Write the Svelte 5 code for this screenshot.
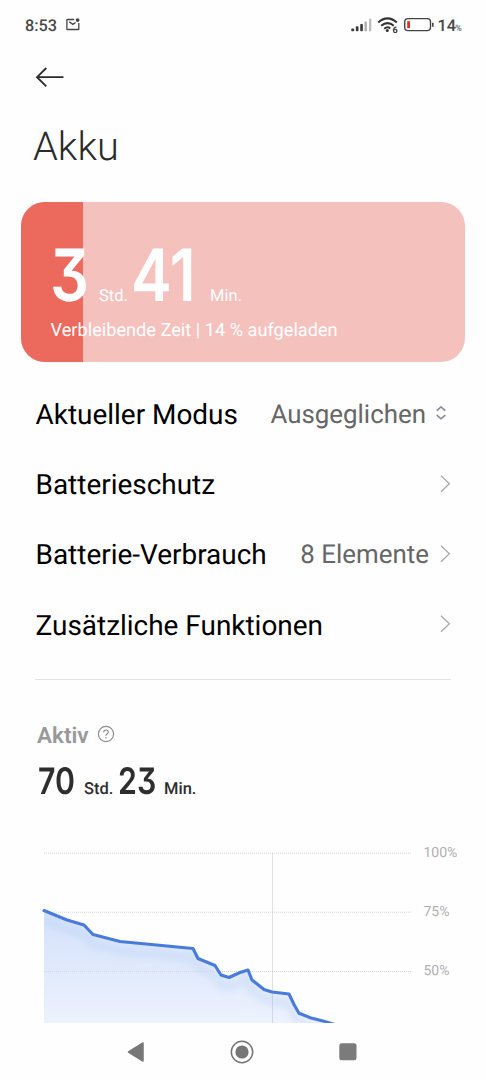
<script>
  const rows = [
    { label: 'Aktueller Modus', value: 'Ausgeglichen', icon: 'sort' },
    { label: 'Batterieschutz', value: '', icon: 'next' },
    { label: 'Batterie-Verbrauch', value: '8 Elemente', icon: 'next' },
    { label: 'Zusätzliche Funktionen', value: '', icon: 'next' }
  ];
  const charge = 14;
  const levels = ['100%', '75%', '50%'];
  const line = '44,70 67,79.5 84,84.5 93,94 120,101 193,108 198,118 215,125 221,134.5 229,137 240,132 248,129.5 252,139.5 264,149 272,151.5 289,153.5 294,164 299,172.7 311,177.5 323,180.5 338,185';
</script>

<div class="screen">
  <header class="status">
    <span class="clock">8:53</span>
    <svg class="mail" width="14" height="13" viewBox="0 0 14 13" fill="none" stroke="#444" stroke-width="1.3">
      <path d="M8.2 1.5H1.4Q.9 1.5 .9 2V10.9Q.9 11.5 1.4 11.5H12.3Q12.8 11.5 12.8 10.9V5" />
      <path d="M3.2 3.8L6.8 6.4L9.6 4.5" />
      <circle cx="11.6" cy="2.1" r="1.9" fill="#444" stroke="none" />
    </svg>
    <div class="spacer"></div>
    <svg width="114" height="24" viewBox="350 13 114 24">
      <g fill="#3c3c3c">
        <rect x="351.2" y="28.5" width="3" height="2.8" rx="1" />
        <rect x="355.8" y="26.3" width="2.7" height="5" rx=".8" />
        <rect x="360.2" y="24" width="2.7" height="7.3" rx=".8" />
        <rect x="364.5" y="21.5" width="2.3" height="9.8" rx=".6" fill="#aaa" />
        <rect x="369" y="18.7" width="2.3" height="12.6" rx=".6" fill="#bbb" />
      </g>
      <g fill="none" stroke="#333" stroke-width="2">
        <path d="M378.2 22.4Q387.5 14.3 396.8 22.4" />
        <path d="M381.2 25.8Q387.5 20.4 393.8 25.8" />
        <path d="M384.2 28.8Q387.5 26 390.2 28.4" />
      </g>
      <circle cx="387.3" cy="30.6" r="1.5" fill="#333" />
      <text x="392.6" y="33" class="wifi">6</text>
      <rect x="404.7" y="18.6" width="25.8" height="12" rx="3.3" fill="#fff" stroke="#444" stroke-width="1.4" />
      <rect x="407.2" y="21.2" width="2.8" height="7" fill="#dc3425" />
      <path d="M432.8 22.8V26.8" stroke="#444" stroke-width="1.6" />
      <text x="437.4" y="31.3" class="pct">14</text>
      <text x="455.2" y="31" class="sign">%</text>
    </svg>
  </header>

  <svg class="back" width="30" height="22" viewBox="0 0 30 22" fill="none" stroke="#2b2b2b" stroke-width="1.8">
    <path d="M28.5 11.2H2M11.3 2L2 11.2L11.3 20.4" />
  </svg>
  <h1>Akku</h1>

  <section class="card">
    <div class="fill" style="width: {charge}%"></div>
    <div class="remaining">
      <span class="num n1">3</span><span class="unit u1">Std.</span><span class="num n2">41</span><span class="unit u2">Min.</span>
    </div>
    <p>Verbleibende Zeit | 14 % aufgeladen</p>
  </section>

  <ul>
    {#each rows as row}
      <li>
        <span class="label">{row.label}</span>
        <span class="value" class:mode={row.icon === 'sort'}>{row.value}</span>
        {#if row.icon === 'sort'}
          <svg class="sort" width="12" height="16" viewBox="0 0 12 16" fill="none" stroke="#858795" stroke-width="1.6">
            <path d="M1.7 5.6L6 2L10.3 5.6M1.7 10.2L6 13.8L10.3 10.2" />
          </svg>
        {:else}
          <svg class="next" width="12" height="18" viewBox="0 0 12 18" fill="none" stroke="#a6a6a6" stroke-width="1.2">
            <path d="M1 .8L9.4 8.8L1 16.8" />
          </svg>
        {/if}
      </li>
    {/each}
  </ul>

  <div class="divider"></div>

  <div class="active">
    <span>Aktiv</span>
    <svg width="18" height="18" viewBox="0 0 18 18" fill="none" stroke="#8e8e8e" stroke-width="1.2">
      <circle cx="9" cy="9" r="7.6" />
      <path d="M6.7 7.3Q6.7 5 9 5T11.3 7.1Q11.3 8.1 10.1 8.9T9 10.8" />
      <path d="M9 12V13.4" />
    </svg>
  </div>
  <div class="total">
    <span class="num">70</span><span class="unit t1">Std.</span><span class="num m2">23</span><span class="unit t2">Min.</span>
  </div>

  <div class="chart">
    <svg width="412" height="183" viewBox="0 0 412 183">
      <defs>
        <linearGradient id="area" x1="0" y1="70" x2="0" y2="183" gradientUnits="userSpaceOnUse">
          <stop offset="0" stop-color="#d3e1fb" />
          <stop offset="1" stop-color="#edf2fd" />
        </linearGradient>
        <clipPath id="under"><polygon points="{line} 338,190 44,190" /></clipPath>
        <filter id="soft" x="-10%" y="-20%" width="120%" height="150%"><feGaussianBlur stdDeviation="3" /></filter>
      </defs>
      <polygon points="{line} 338,190 44,190" fill="url(#area)" />
      <g clip-path="url(#under)">
        <polyline points={line} transform="translate(0 10)" fill="none" stroke="#b4cdf4" stroke-opacity=".32" stroke-width="9" filter="url(#soft)" />
      </g>
      <g stroke="#d4d6da" stroke-width="1" stroke-dasharray="1 1">
        <path d="M44 13.2H411M44 72.2H411M44 131.5H411" />
      </g>
      <path d="M272.5 13V183" stroke="#8791a5" stroke-opacity=".25" />
      <polyline points={line} transform="translate(0 .5)" fill="none" stroke="#487bdc" stroke-width="3.1" stroke-linejoin="round" stroke-linecap="round" />
    </svg>
    <div class="levels">
      {#each levels as level}<span>{level}</span>{/each}
    </div>
  </div>

  <nav>
    <svg width="18" height="24" viewBox="0 0 18 24"><path d="M16 3V21L1.5 12Z" fill="#777" stroke="#777" stroke-width="1.5" stroke-linejoin="round" /></svg>
    <svg width="24" height="24" viewBox="0 0 24 24"><circle cx="12" cy="12" r="10.7" fill="none" stroke="#777" stroke-width="1.5" /><circle cx="12" cy="12" r="6.6" fill="#777" /></svg>
    <svg width="18" height="24" viewBox="0 0 18 24"><rect x=".3" y="3.3" width="17.2" height="17" rx="2.5" fill="#7b7b7b" /></svg>
  </nav>
</div>

<style>
  :global(body) { background: #fff; }
  .screen { width: 486px; height: 1080px; overflow: hidden; display: flex; flex-direction: column; background: #fefefe; font-family: Roboto, sans-serif; color: #000; white-space: nowrap; text-rendering: geometricPrecision; }
  .status { height: 24px; padding: 13px 22px 0 25px; display: flex; align-items: center; flex: none; }
  .clock { font-size: 16.3px; font-weight: 500; color: #484848; line-height: 24px; margin-top: 1px; }
  .mail { margin: -2px 0 0 8.5px; }
  .spacer { flex: 1; }
  .wifi { font-size: 9px; font-weight: 700; fill: #333; }
  .pct { font-size: 16.3px; font-weight: 500; fill: #484848; }
  .sign { font-size: 8.8px; font-weight: 500; fill: #666; }
  .back { margin: 29px 0 0 35px; flex: none; }
  h1 { margin: 35px 0 0 33px; font-size: 39.8px; line-height: 48px; font-weight: 300; color: #2b2b2b; flex: none; }
  .card { position: relative; box-sizing: border-box; flex: none; width: 444px; height: 160px; margin: 31px 0 0 21px; padding: 38px 30px 0; border-radius: 24px; background: #f4c1bd; overflow: hidden; color: #fff; }
  .fill { position: absolute; left: 0; top: 0; bottom: 0; background: #eb695d; }
  .remaining { position: relative; display: flex; align-items: baseline; height: 72px; line-height: 72px; }
  .num { font-family: Inter, sans-serif; font-feature-settings: "cv09"; transform-origin: left; }
  .card .num { font-size: 72px; font-weight: 600; transform: scaleX(.85); width: 36px; }
  .card .n1 { margin-left: -1px; width: 37px; }
  .card .n2 { width: 66px; margin-left: -2px; }
  .card .unit { font-size: 16.5px; }
  .u1 { margin-left: 12px; width: 34px; }
  .card .u2 { margin-left: 13px; }
  p { position: relative; margin: 7px 0 0 -.5px; font-size: 18.2px; line-height: 23px; }
  ul { list-style: none; margin: 17px 0 0; padding: 0 34px 0 35.5px; flex: none; }
  li { display: flex; align-items: center; height: 70.4px; }
  .label { flex: 1; font-size: 27.95px; }
  .value { font-size: 25.9px; color: #666; margin: 1px 11px 0 0; }
  .mode { margin-right: 9px; }
  .sort { margin: -3px 5px 0 0; }
  .next { margin-top: -2px; }
  .divider { height: 1px; flex: none; background: #e4e4e4; margin: 18px 35px 0; }
  .active { display: flex; align-items: center; height: 30px; margin: 41px 0 0 37px; gap: 8px; font-size: 22.5px; font-weight: 600; color: #999; flex: none; }
  .active svg { margin-top: -3px; }
  .total { display: flex; align-items: baseline; height: 40px; line-height: 40px; margin: 10px 0 0 38px; color: #2e2e2e; flex: none; }
  .total .num { font-size: 36.5px; font-weight: 600; transform: scaleX(.83); width: 38px; }
  .total .m2 { margin-left: -1px; }
  .total .unit { font-size: 16.5px; font-weight: 500; }
  .t1 { margin-left: 8px; width: 35px; }
  .t2 { margin-left: 8px; }
  .chart { display: flex; margin-top: 39px; height: 183px; flex: none; }
  .chart svg { flex: none; }
  .levels { display: flex; flex-direction: column; margin-left: 11.5px; padding-top: 1px; font-size: 14px; color: #b0b0b0; }
  .levels span { height: 59.3px; line-height: 25px; }
  nav { display: flex; margin: 17px 0 0 127px; gap: 85px; }
</style>
